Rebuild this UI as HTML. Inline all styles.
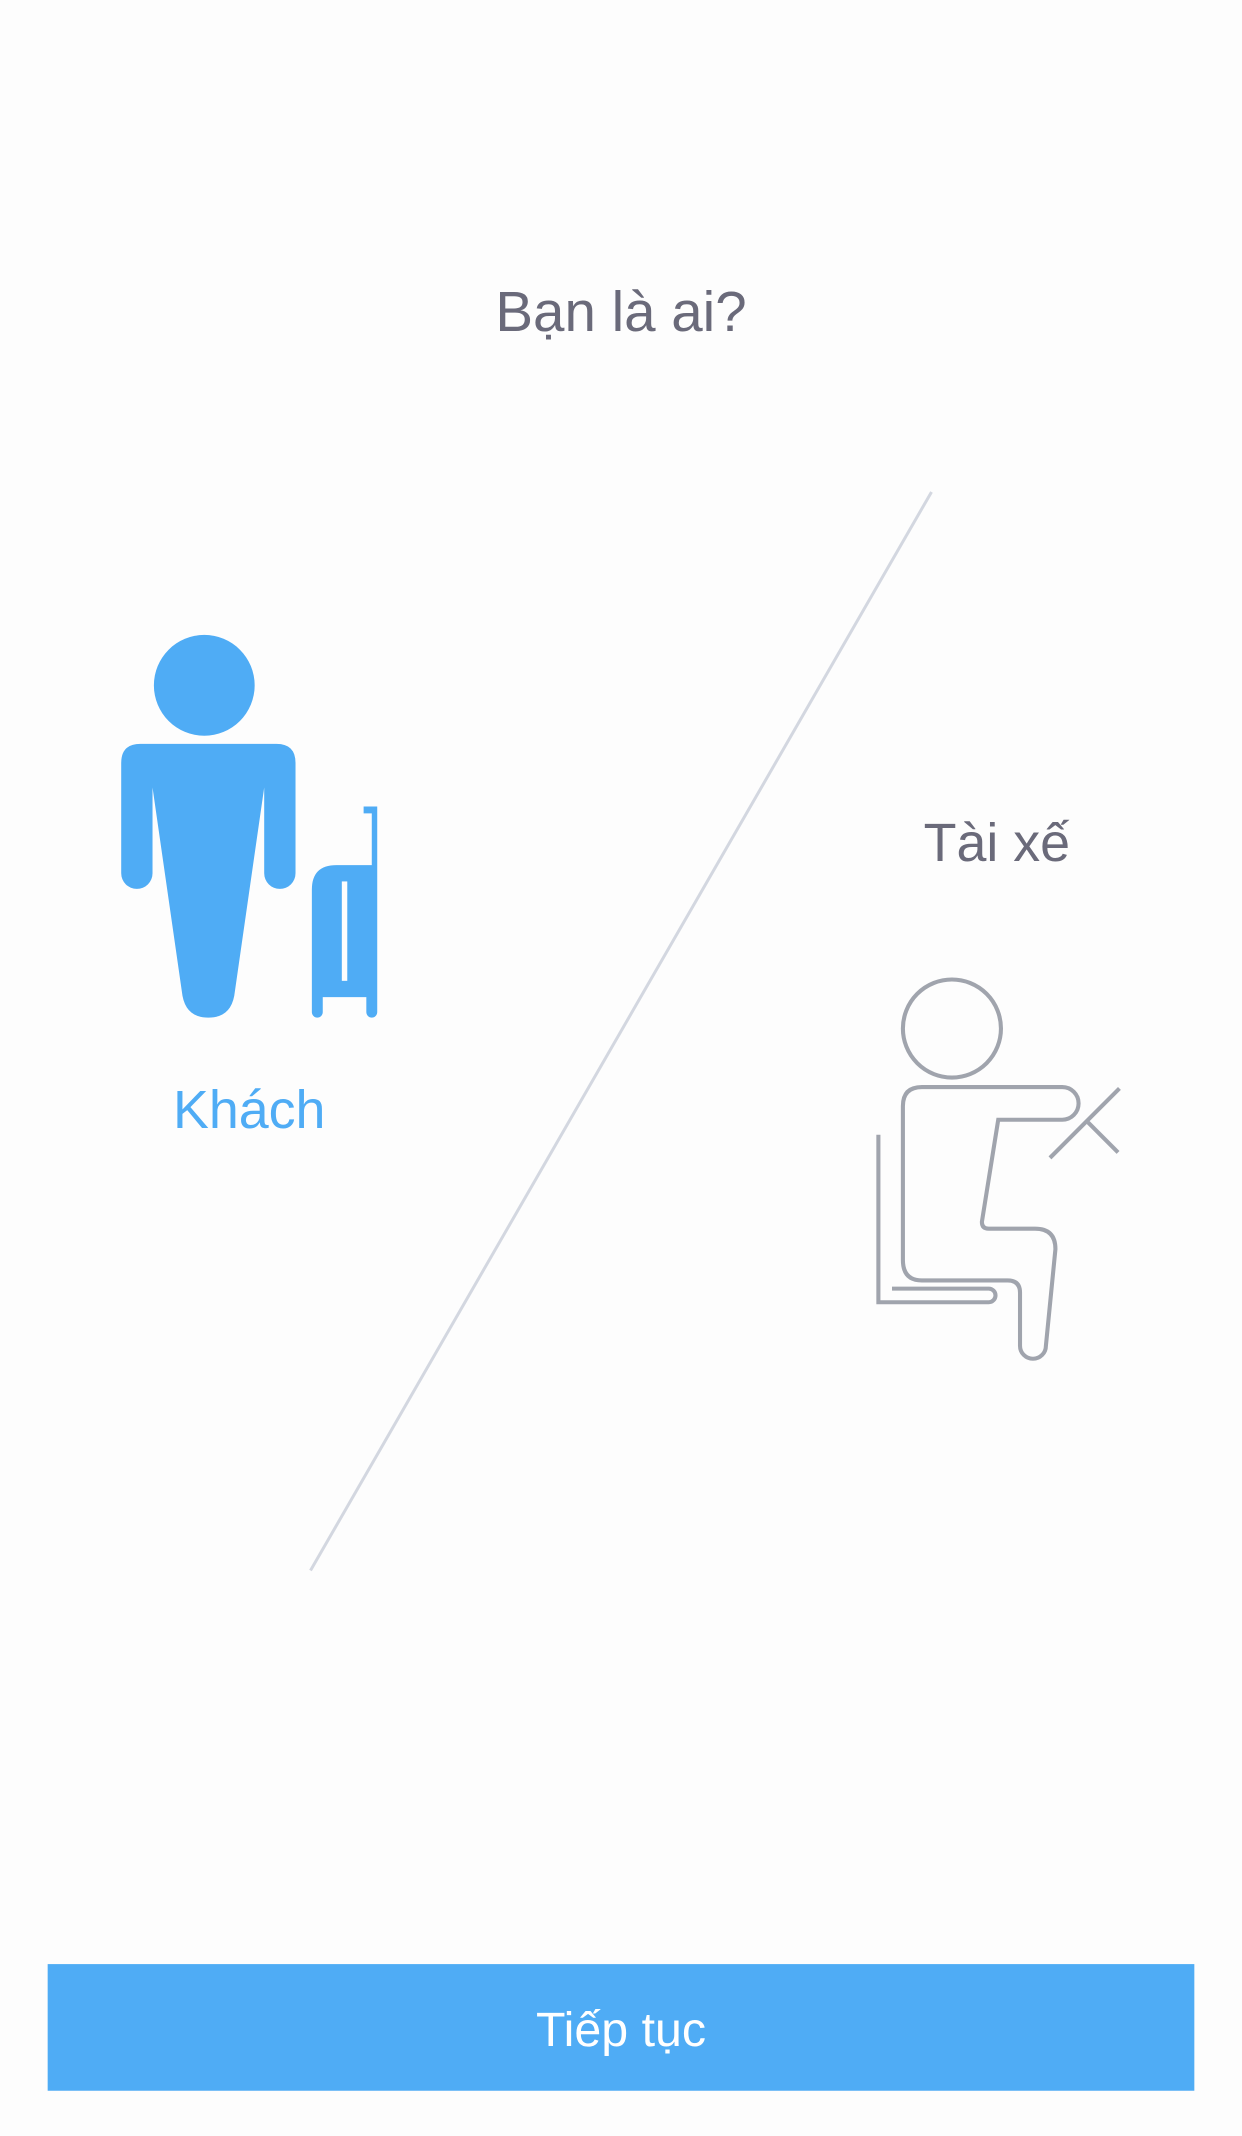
<!DOCTYPE html>
<html><head><meta charset="utf-8"><style>
html,body{margin:0;padding:0;background:#fdfdfd;}
svg{display:block;}
text{font-family:"Liberation Sans","Noto Sans CJK SC",sans-serif;}
</style></head><body>
<svg width="1242" height="2136" viewBox="0 0 912 1568" xmlns="http://www.w3.org/2000/svg">
<rect width="912" height="1568" fill="#fdfdfd"/>
<text x="456" y="243" font-size="41.5" fill="#6a6a7a" text-anchor="middle">Bạn là ai?</text>
<line x1="684" y1="361" x2="228" y2="1153" stroke="#d3d7e0" stroke-width="2.2"/>
<g fill="#4facf5">
<circle cx="150" cy="503" r="37"/>
<path d="M103,546 H203 Q217,546 217,560 V641 A11.5,11.5 0 0 1 194,641 V578 L172,731 Q169,747 153,747 Q137,747 134,731 L112,578 V641 A11.5,11.5 0 0 1 89,641 V560 Q89,546 103,546 Z"/>
<path d="M247,635 H273 V597 H267 V592 H277 V743 A4,4 0 0 1 269,743 V732 H237 V743 A4,4 0 0 1 229,743 V653 Q229,635 247,635 Z"/>
</g>
<rect x="251" y="647" width="4" height="73" fill="#fdfdfd"/>
<text x="183" y="828" font-size="39.5" fill="#4facf5" text-anchor="middle">Khách</text>
<text x="732" y="632" font-size="39.5" fill="#6a6a7a" text-anchor="middle">Tài xế</text>
<g fill="none" stroke="#a0a4ad" stroke-width="3">
<circle cx="699" cy="755" r="36"/>
<path d="M780,798 H677 Q663,798 663,812 V925 Q663,940 677,940 H740 Q749,940 749,949 V988 A9.5,9.5 0 0 0 768,988 L775,917 Q775,902 760,902 H726 Q721,902 721,897 L733,822 H780 A12,12 0 0 0 780,798 Z"/>
<path d="M645,833 V956 H726 A5,5 0 0 0 726,946 H655"/>
<line x1="771" y1="850" x2="822" y2="799"/>
<line x1="799" y1="824" x2="821" y2="846"/>
</g>
<rect x="35" y="1442" width="842" height="93" fill="#4facf5"/>
<text x="456" y="1502" font-size="35.5" fill="#ffffff" text-anchor="middle">Tiếp tục</text>
</svg>
</body></html>
